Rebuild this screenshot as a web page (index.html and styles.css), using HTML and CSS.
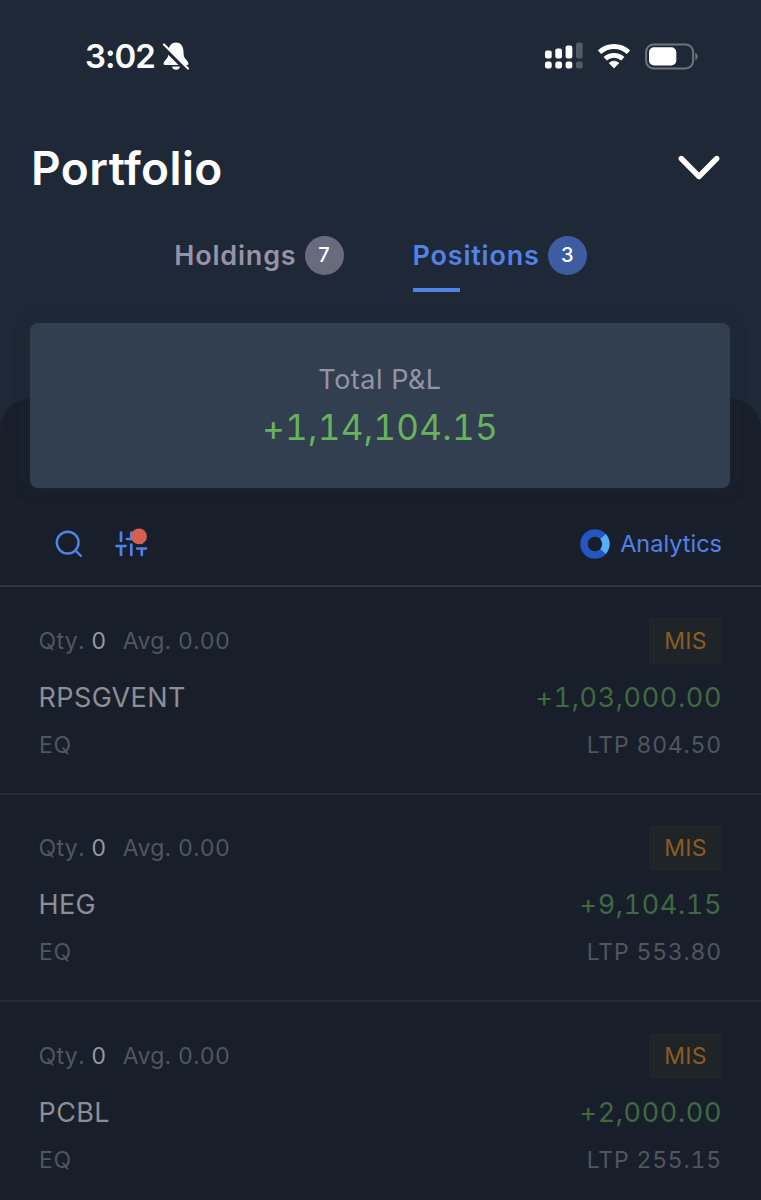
FILE: index.html
```html
<!DOCTYPE html>
<html lang="en">
<head>
<meta charset="utf-8">
<title>Portfolio</title>
<link rel="stylesheet" href="styles.css">
</head>
<body>
	<div class="status">
		<span class="time">3:02</span>
		<svg class="bell" width="28" height="30" viewBox="0 0 28 30">
			<path d="M14 1.500C9.500 1.500 7 5 6.600 9.500L6.300 14C6 17.500 2 19.500 1.500 22.500Q1.500 24 3 24H25Q26.500 24 26.500 22.500C26 19.500 22 17.500 21.700 14L21.400 9.500C21 5 18.500 1.500 14 1.500Z" fill="#fff"/>
			<path d="M10 25.500H18Q17.300 28.800 14 28.800T10 25.500Z" fill="#fff"/>
			<path d="M1 5L25 29" stroke="#1f2836" stroke-width="5"/>
			<path d="M2 3.500L26 27.500" stroke="#fff" stroke-width="2.200" stroke-linecap="round"/>
		</svg>
		<svg class="signal" width="38" height="28" viewBox="0 0 38 28">
			<g fill="#fff">
				<rect x="0" y="8.500" width="6.700" height="8" rx="2"/>
				<rect x="10.300" y="6.500" width="6.700" height="10" rx="2"/>
				<rect x="20.600" y="3.500" width="6.700" height="13" rx="2"/>
				<rect x="0" y="19.500" width="6.700" height="7" rx="2.300"/>
				<rect x="10.300" y="19.500" width="6.700" height="7" rx="2.300"/>
				<rect x="20.600" y="19.500" width="6.700" height="7" rx="2.300"/>
			</g>
			<g fill="#525a66">
				<rect x="31" y="0.500" width="6.700" height="16" rx="2"/>
				<rect x="31" y="19.500" width="6.700" height="7" rx="2.300"/>
			</g>
		</svg>
		<svg class="wifi" width="34" height="26" viewBox="0 0 34 26">
			<g fill="none" stroke="#fff" stroke-width="4.800">
				<path d="M2.500 9.300A21 21 0 0 1 31.500 9.300"/>
				<path d="M8.200 15.800A13 13 0 0 1 25.800 15.800"/>
			</g>
			<path d="M12.200 20Q17 16.300 21.800 20L17 25Z" fill="#fff" stroke="#fff" stroke-width="0.800" stroke-linejoin="round"/>
		</svg>
		<svg class="battery" width="54" height="27" viewBox="0 0 54 27">
			<rect x="1.100" y="1.400" width="47" height="24" rx="7.500" fill="none" stroke="#6d747e" stroke-width="2"/>
			<rect x="4" y="4.300" width="27.300" height="18.200" rx="5" fill="#fff"/>
			<path d="M50.300 9.500Q52.700 10.800 52.700 13.400T50.300 17.300Z" fill="#6d747e"/>
		</svg>
	</div>

	<div class="header">
		<h1>Portfolio</h1>
		<svg width="42" height="26" viewBox="0 0 42 26">
			<path d="M3.300 3.500L21 21.500L38.700 3.500" fill="none" stroke="#fff" stroke-width="5.400" stroke-linecap="round" stroke-linejoin="round"/>
		</svg>
	</div>

	<div class="tabs">
		<a class="tab"><span class="name">Holdings</span><span class="count">7</span></a>
		<a class="tab active"><span class="name">Positions</span><span class="count">3</span></a>
	</div>

	<div class="sheet">
		<div class="total">
			<p class="label">Total P&amp;L</p>
			<p class="amount">+1,14,104.15</p>
		</div>

		<div class="tools">
			<svg class="search" width="28" height="28" viewBox="0 0 28 28">
				<g fill="none" stroke="#5281e8" stroke-width="2.400" stroke-linecap="round">
					<circle cx="12.700" cy="12.600" r="10.900"/>
					<path d="M20.300 20.300L26 26"/>
				</g>
			</svg>
			<svg class="filter" width="34" height="32" viewBox="0 0 34 32">
				<path d="M6 4.500V13M1.500 18H10.500M6 18V27M16.300 4.500V11M12 11H20.700M16.300 16.500V27M26.800 4.500V15M22.300 20.500H31M26.800 20.500V27" fill="none" stroke="#5281e8" stroke-width="2.700" stroke-linecap="round"/>
				<circle cx="24" cy="8.400" r="7.900" fill="#d6604f"/>
			</svg>
			<a class="analytics">
				<svg width="30" height="30" viewBox="0 0 30 30">
					<circle cx="15" cy="15" r="11" fill="none" stroke="#2456c2" stroke-width="7.400"/>
					<path d="M23 7.600A11 11 0 0 1 23 22.400" fill="none" stroke="#56adf8" stroke-width="7.400"/>
				</svg>
				<span>Analytics</span>
			</a>
		</div>

		<ul class="list">
			<li>
				<div class="line">
					<p class="qty">Qty. <b>0</b><span class="avg">Avg. 0.00</span></p>
					<span class="mis">MIS</span>
				</div>
				<div class="line main">
					<span class="symbol">RPSGVENT</span>
					<span class="profit">+1,03,000.00</span>
				</div>
				<div class="line last">
					<span class="eq">EQ</span>
					<span class="ltp">LTP 804.50</span>
				</div>
			</li>
			<li>
				<div class="line">
					<p class="qty">Qty. <b>0</b><span class="avg">Avg. 0.00</span></p>
					<span class="mis">MIS</span>
				</div>
				<div class="line main">
					<span class="symbol">HEG</span>
					<span class="profit">+9,104.15</span>
				</div>
				<div class="line last">
					<span class="eq">EQ</span>
					<span class="ltp">LTP 553.80</span>
				</div>
			</li>
			<li>
				<div class="line">
					<p class="qty">Qty. <b>0</b><span class="avg">Avg. 0.00</span></p>
					<span class="mis">MIS</span>
				</div>
				<div class="line main">
					<span class="symbol">PCBL</span>
					<span class="profit">+2,000.00</span>
				</div>
				<div class="line last">
					<span class="eq">EQ</span>
					<span class="ltp">LTP 255.15</span>
				</div>
			</li>
		</ul>
	</div>
</body>
</html>
```
FILE: styles.css
```css
*{
	margin:0;
	padding:0;
	box-sizing:border-box;
	list-style:none;
	text-decoration:none;
}
body{
	height:1200px;
	overflow:hidden;
	background:#1f2836;
	color:#fff;
	font-family:Inter,"Liberation Sans",sans-serif;
}
svg{
	display:block;
	flex:none;
}
.status{
	display:flex;
	align-items:center;
	height:112px;
	padding:0 62px 0 85px;
}
.time{
	font-size:33px;
	font-weight:600;
	letter-spacing:-1px;
}
.bell{
	margin-left:7px;
}
.signal{
	margin-left:auto;
}
.wifi{
	margin-left:14px;
}
.battery{
	margin-left:14px;
}
.header{
	display:flex;
	align-items:center;
	justify-content:space-between;
	height:112px;
	padding:0 41px 0 31px;
}
h1{
	font-size:46px;
	font-weight:600;
	letter-spacing:0.4px;
}
.tabs{
	display:flex;
	justify-content:center;
	gap:69px;
	height:68px;
	padding-top:12px;
}
.tab{
	display:flex;
	gap:8px;
	height:56px;
	line-height:39px;
	color:#9494a9;
}
.name{
	font-size:27px;
	font-weight:600;
	letter-spacing:0.8px;
}
.count{
	width:39px;
	height:39px;
	border-radius:50%;
	background:#686b7b;
	color:#fff;
	font-size:20px;
	font-weight:500;
	text-align:center;
}
.active{
	color:#5281e8;
	background:linear-gradient(#5281e8,#5281e8) no-repeat left bottom / 47px 4px;
}
.active .count{
	background:#3d5da0;
}
.sheet{
	height:802px;
	margin-top:106px;
	border-radius:32px 32px 0 0;
	background:#181f2a;
}
.total{
	position:relative;
	top:-75px;
	height:165px;
	margin:0 31px -75px 30px;
	padding-top:37px;
	border-radius:8px;
	background:#323f50;
	box-shadow:0 0 14px rgba(32,46,56,.5);
	text-align:center;
}
.label{
	line-height:40px;
	font-size:27px;
	letter-spacing:0.5px;
	color:#9494a9;
}
.amount{
	line-height:54px;
	font-size:35px;
	font-variant-numeric:tabular-nums;
	letter-spacing:0.3px;
	color:#67b25b;
}
.tools{
	display:flex;
	align-items:center;
	height:99px;
	padding:14px 39px 0 55px;
	border-bottom:2px solid #2f3642;
}
.filter{
	margin:0 auto 0 32px;
}
.analytics{
	display:flex;
	align-items:center;
	gap:10px;
	font-size:23.5px;
	color:#5281e8;
}
.list li{
	height:207.5px;
	padding:30.5px 39px 0;
	border-bottom:2px solid #242a35;
	color:#50565f;
	font-size:23px;
	font-variant-numeric:tabular-nums;
	letter-spacing:0.8px;
}
.line{
	display:flex;
	align-items:center;
	justify-content:space-between;
	height:46px;
}
.qty{
	margin-left:-0.5px;
	letter-spacing:0.4px;
}
.line b{
	color:#95999f;
	font-weight:400;
}
.avg{
	margin-left:16px;
}
.mis{
	width:73px;
	height:46px;
	line-height:46px;
	background:#1f2429;
	color:#8b5c20;
	text-align:center;
	letter-spacing:0.3px;
}
.main{
	height:67px;
	font-size:27px;
}
.symbol{
	margin-left:-0.5px;
	color:#8b8f95;
	letter-spacing:0.4px;
}
.profit{
	color:#3f6942;
	letter-spacing:0.6px;
}
.last{
	height:28px;
}
```
